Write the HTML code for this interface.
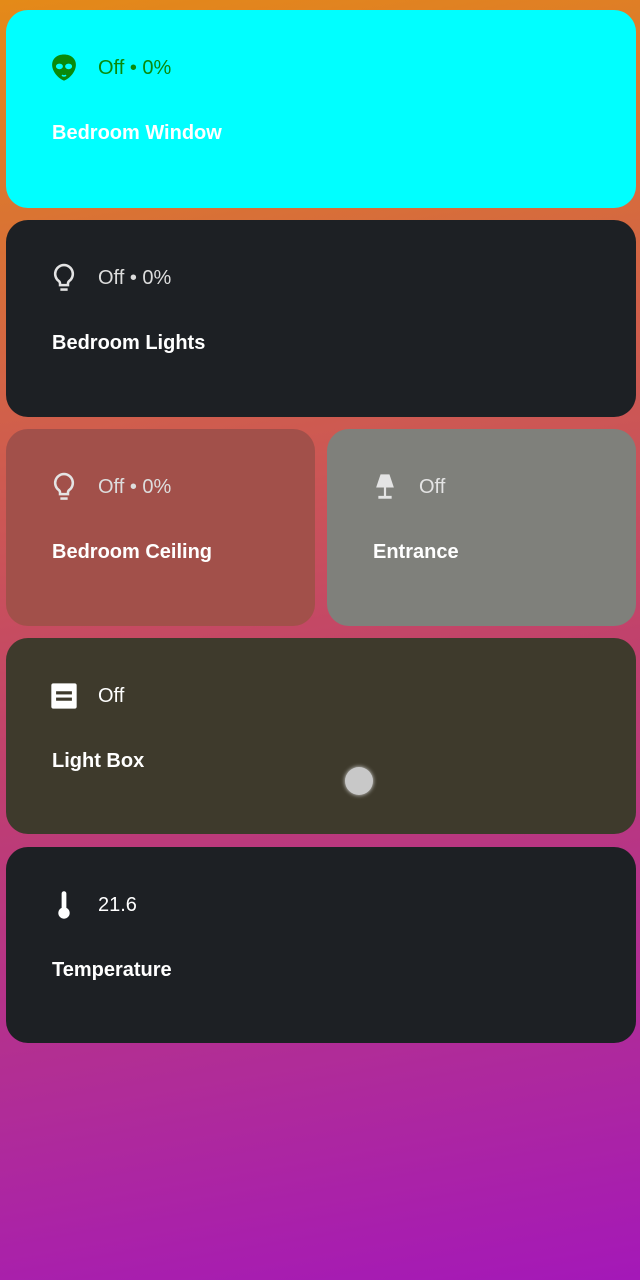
<!DOCTYPE html>
<html><head><style>
html,body{margin:0;padding:0}
body{width:640px;height:1280px;position:relative;overflow:hidden;font-family:"Liberation Sans",sans-serif;
background:linear-gradient(170deg,#e48a18 0%,#d1604a 30%,#c0406e 55%,#b02c98 80%,#a418b8 100%);}
.c{position:absolute;border-radius:22px;box-sizing:border-box}
.ic{position:absolute;left:39px;top:39px;width:38px;height:38px}
.st{position:absolute;left:92px;top:45px;font-size:20px;line-height:26px}
.nm{position:absolute;left:46px;top:110px;font-size:20px;line-height:26px;font-weight:bold;color:#fff}
</style></head><body>
<div class="c" style="left:6px;top:10px;width:630px;height:198px;background:#00ffff">
<svg class="ic" viewBox="0 0 24 24"><path fill="#0a8a0a" d="M12 3.5C7.5 3.5 4.5 6.2 4.5 10c0 3.9 3.4 8.3 7.5 10 4.1-1.7 7.5-6.1 7.5-10 0-3.8-3-6.5-7.5-6.5z"/><ellipse cx="9.1" cy="11" rx="2.2" ry="1.8" fill="#00ffff"/><ellipse cx="14.9" cy="11" rx="2.2" ry="1.8" fill="#00ffff"/><path d="M10.7 16.6q1.3 .9 2.6 0" stroke="#00ffff" stroke-width="1" fill="none"/></svg>
<div class="st" style="color:#0a8a0a">Off • 0%</div>
<div class="nm">Bedroom Window</div></div>
<div class="c" style="left:6px;top:220px;width:630px;height:197px;background:#1d2024">
<svg class="ic" viewBox="0 0 24 24"><path fill="none" stroke="#e4e4e4" stroke-width="1.6" d="M12 3.8a5.6 5.6 0 0 0-3.3 10.1c.5.4.8 1 .8 1.7v.9h5v-.9c0-.7.3-1.3.8-1.7A5.6 5.6 0 0 0 12 3.8z"/><path d="M9.7 19.3h4.6" stroke="#e4e4e4" stroke-width="1.6"/></svg>
<div class="st" style="color:#ddd">Off • 0%</div>
<div class="nm">Bedroom Lights</div></div>
<div class="c" style="left:6px;top:429px;width:309px;height:197px;background:#a2504a">
<svg class="ic" viewBox="0 0 24 24"><path fill="none" stroke="#e4e4e4" stroke-width="1.6" d="M12 3.8a5.6 5.6 0 0 0-3.3 10.1c.5.4.8 1 .8 1.7v.9h5v-.9c0-.7.3-1.3.8-1.7A5.6 5.6 0 0 0 12 3.8z"/><path d="M9.7 19.3h4.6" stroke="#e4e4e4" stroke-width="1.6"/></svg>
<div class="st" style="color:#ddd">Off • 0%</div>
<div class="nm">Bedroom Ceiling</div></div>
<div class="c" style="left:327px;top:429px;width:309px;height:197px;background:#7f807b">
<svg class="ic" viewBox="0 0 24 24"><path fill="#e4e4e4" d="M9.2 4h5.6l2.8 8.3H6.4z"/><rect x="11.3" y="12" width="1.4" height="5.8" fill="#e4e4e4"/><rect x="7.8" y="17.6" width="8.4" height="1.8" fill="#e4e4e4"/></svg>
<div class="st" style="color:#e4e4e4">Off</div>
<div class="nm">Entrance</div></div>
<div class="c" style="left:6px;top:638px;width:630px;height:196px;background:#3e3a2c">
<svg class="ic" viewBox="0 0 24 24"><rect x="4" y="4" width="16" height="16" rx="1.3" fill="#fff"/><rect x="7" y="9" width="10" height="2" fill="#3e3a2c"/><rect x="7" y="13" width="10" height="2" fill="#3e3a2c"/></svg>
<div class="st" style="color:#fff">Off</div>
<div class="nm">Light Box</div>
<div style="position:absolute;left:339px;top:129px;width:28px;height:28px;border-radius:50%;background:#c8c8c8;box-shadow:0 0 4px #ddd"></div></div>
<div class="c" style="left:6px;top:847px;width:630px;height:196px;background:#1d2024">
<svg class="ic" viewBox="0 0 24 24"><path fill="#fff" d="M10.5 4.8a1.5 1.5 0 0 1 3 0v9a3.6 3.6 0 1 1-3 0z"/></svg>
<div class="st" style="color:#fff">21.6</div>
<div class="nm">Temperature</div></div>
</body></html>
